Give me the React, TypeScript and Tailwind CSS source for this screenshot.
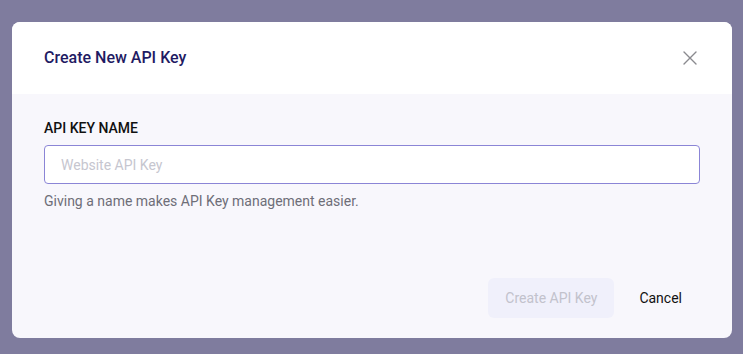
import React from "react";

export default function App() {
  return (
    <div
      className="w-[743px] h-[354px] bg-[#7f7c9e] pt-[22px] px-[12px]"
      style={{ fontFamily: "Roboto, 'Noto Sans', sans-serif" }}
    >
      <div className="w-[720px] h-[316px] rounded-lg overflow-hidden bg-[#f8f7fc] flex flex-col">
        <div className="h-[72px] bg-white flex items-center justify-between pl-8 pr-[34px]">
          <h2 className="text-[16px] font-medium text-[#1f1b63]">Create New API Key</h2>
          <svg width="16" height="16" viewBox="0 0 16 16" className="text-[#8a8a8f]">
            <path d="M2 2 L14 14 M14 2 L2 14" stroke="currentColor" strokeWidth="1.4" strokeLinecap="round" />
          </svg>
        </div>
        <div className="flex-1 flex flex-col px-8 pt-[24px]">
          <label className="text-[14px] leading-5 font-medium text-[#111111]">API KEY NAME</label>
          <input
            placeholder="Website API Key"
            className="mt-[7px] h-[39px] w-full rounded border border-[#8b85d6] bg-white px-4 text-[14px] text-[#222] placeholder:text-[#c6c6cf] outline-none"
          />
          <p className="mt-[7px] text-[14px] leading-5 text-[#6e6e78]">
            Giving a name makes API Key management easier.
          </p>
          <div className="mt-auto mb-5 flex justify-end gap-2 pr-px">
            <button className="h-10 px-[17px] rounded-md bg-[#f0f0fb] text-[14px] text-[#c2c2cc]">
              Create API Key
            </button>
            <button className="h-10 px-[17px] rounded-md text-[14px] text-[#111111]">
              Cancel
            </button>
          </div>
        </div>
      </div>
    </div>
  );
}
